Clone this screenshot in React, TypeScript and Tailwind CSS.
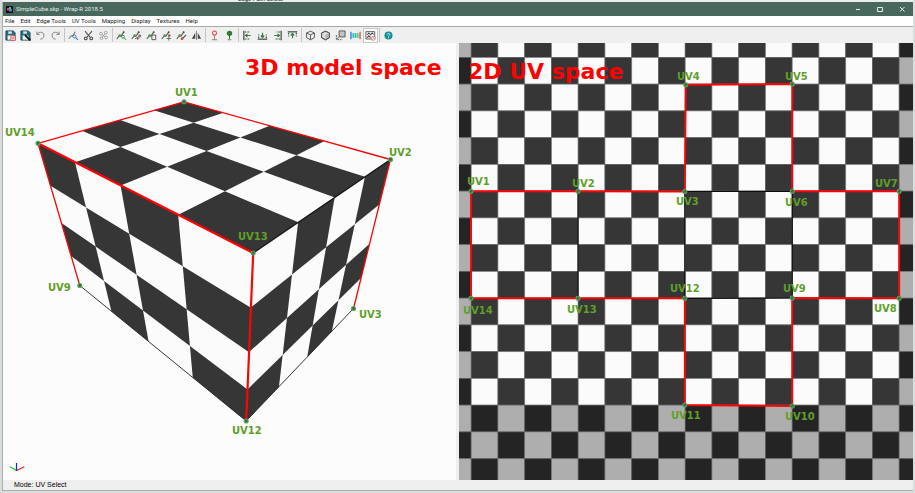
import type { ReactNode } from 'react'

type Point = [number, number]

interface Label {
  text: string
  x: number
  y: number
}

interface Tool {
  name: string
  icon: ReactNode
  active?: boolean
}

const MENU = ['File', 'Edit', 'Edge Tools', 'UV Tools', 'Mapping', 'Display', 'Textures', 'Help']

const VIEW_BOX = '0 0 454 437'
const DARK = '#363636'
const LIGHT = '#fbfbfb'
const RED = '#fa0505'

// Cube corners in the 3D view
const CUBE: Record<string, Point> = {
  UV14: [35, 100.3],
  UV1: [181, 58.8],
  UV2: [387.5, 116.5],
  UV13: [250.2, 210],
  UV9: [76.8, 242.5],
  UV12: [243.2, 378],
  UV3: [350.5, 265.5]
}

const CUBE_LABELS: Label[] = [
  { text: 'UV1', x: 172, y: 53 },
  { text: 'UV14', x: 2, y: 93 },
  { text: 'UV2', x: 386, y: 113 },
  { text: 'UV13', x: 235, y: 197 },
  { text: 'UV9', x: 45, y: 248 },
  { text: 'UV3', x: 356, y: 275 },
  { text: 'UV12', x: 229, y: 391 }
]

// Unfolded corners in the UV view
const UV: Record<string, Point> = {
  UV1: [12, 148.3],
  UV2: [119, 148.3],
  UV3: [225.8, 148.5],
  UV4: [226.8, 41.8],
  UV5: [333.3, 41],
  UV6: [333.3, 148.3],
  UV7: [440.2, 148.3],
  UV8: [440.2, 255.3],
  UV9: [333.2, 255],
  UV10: [333.3, 363],
  UV11: [225.8, 362],
  UV12: [225.8, 255.3],
  UV13: [119, 255.3],
  UV14: [12, 255.3]
}

const UV_LABELS: Label[] = [
  { text: 'UV4', x: 218, y: 37 },
  { text: 'UV5', x: 326, y: 37 },
  { text: 'UV1', x: 8, y: 142 },
  { text: 'UV2', x: 113, y: 144 },
  { text: 'UV7', x: 416, y: 144 },
  { text: 'UV3', x: 217, y: 162 },
  { text: 'UV6', x: 326, y: 163 },
  { text: 'UV12', x: 211, y: 249 },
  { text: 'UV9', x: 324, y: 249 },
  { text: 'UV14', x: 4, y: 271 },
  { text: 'UV13', x: 108, y: 270 },
  { text: 'UV8', x: 415, y: 269 },
  { text: 'UV11', x: 212, y: 376 },
  { text: 'UV10', x: 326, y: 377 }
]

const OUTLINE = ['UV1', 'UV2', 'UV3', 'UV4', 'UV5', 'UV6', 'UV7', 'UV8', 'UV9', 'UV10', 'UV11', 'UV12', 'UV13', 'UV14']
const FOLDS = [['UV2', 'UV13'], ['UV3', 'UV12'], ['UV6', 'UV9'], ['UV3', 'UV6'], ['UV12', 'UV9']]

// Maps the unit square onto a quad: (0,0) (1,0) (1,1) (0,1) -> a b c d
function projector(a: Point, b: Point, c: Point, d: Point) {
  const sx = a[0] - b[0] + c[0] - d[0]
  const sy = a[1] - b[1] + c[1] - d[1]
  const dx1 = b[0] - c[0]
  const dy1 = b[1] - c[1]
  const dx2 = d[0] - c[0]
  const dy2 = d[1] - c[1]
  const det = dx1 * dy2 - dx2 * dy1
  const g = (sx * dy2 - dx2 * sy) / det
  const h = (dx1 * sy - sx * dy1) / det

  return (u: number, v: number): Point => {
    const w = g * u + h * v + 1
    return [
      ((b[0] - a[0] + g * b[0]) * u + (d[0] - a[0] + h * d[0]) * v + a[0]) / w,
      ((b[1] - a[1] + g * b[1]) * u + (d[1] - a[1] + h * d[1]) * v + a[1]) / w
    ]
  }
}

function points(list: Point[]) {
  return list.map(p => p.join(',')).join(' ')
}

function Face({ corners, darkFirst }: { corners: [string, string, string, string]; darkFirst: boolean }) {
  const [a, b, c, d] = corners.map(name => CUBE[name])
  const project = projector(a, b, c, d)
  const cells: ReactNode[] = []

  for (let row = 0; row < 4; row++) {
    for (let col = 0; col < 4; col++) {
      if (((row + col) % 2 === 0) !== darkFirst) continue
      const u = col / 4
      const v = row / 4
      cells.push(
        <polygon
          key={`${row}-${col}`}
          points={points([project(u, v), project(u + 0.25, v), project(u + 0.25, v + 0.25), project(u, v + 0.25)])}
          fill={DARK}
        />
      )
    }
  }

  return (
    <g>
      <polygon points={points([a, b, c, d])} fill={LIGHT} />
      {cells}
    </g>
  )
}

function Markers({ corners }: { corners: Record<string, Point> }) {
  return (
    <g fill="#3f6b43" stroke="#5aa35a" strokeWidth="1.1">
      {Object.entries(corners).map(([name, [x, y]]) => (
        <circle key={name} cx={x} cy={y} r="2" />
      ))}
    </g>
  )
}

function Labels({ items }: { items: Label[] }) {
  return (
    <g className="fill-[#5f9f2a] text-[10px] font-bold">
      {items.map(item => (
        <text key={item.text} x={item.x} y={item.y}>
          {item.text}
        </text>
      ))}
    </g>
  )
}

function ModelView() {
  return (
    <svg viewBox={VIEW_BOX} className="block w-full bg-[#fcfcfc] font-['DejaVu_Sans',sans-serif]">
      <Face corners={['UV14', 'UV1', 'UV2', 'UV13']} darkFirst={false} />
      <Face corners={['UV14', 'UV13', 'UV12', 'UV9']} darkFirst />
      <Face corners={['UV13', 'UV2', 'UV3', 'UV12']} darkFirst={false} />

      <g fill="none" strokeLinejoin="round">
        <polyline points={points([CUBE.UV9, CUBE.UV12, CUBE.UV3])} stroke="#222" strokeWidth="0.9" />
        <polyline points={points([CUBE.UV13, CUBE.UV2])} stroke="#111" strokeWidth="1.3" />
        <polyline points={points([CUBE.UV9, CUBE.UV14, CUBE.UV1, CUBE.UV2, CUBE.UV3])} stroke={RED} strokeWidth="1.3" />
        <polyline points={points([CUBE.UV14, CUBE.UV13, CUBE.UV12])} stroke={RED} strokeWidth="2.2" />
      </g>
      <Markers corners={CUBE} />
      <Labels items={CUBE_LABELS} />
      <text x="242" y="32" className="fill-[#ff0000] text-[22px] font-bold">3D model space</text>

      {/* Axis gizmo */}
      <g strokeWidth="1.2" fill="none">
        <path d="M13.7 427.5L7 423.8" stroke="#00e000" />
        <path d="M13.7 427.5L21.3 423.8" stroke="#f02020" />
        <path d="M13.5 428V420" stroke="#2020f0" />
      </g>
      <rect x="453" width="1" height="437" fill="#efefef" />
    </svg>
  )
}

const CELL = 26.75

function Checker() {
  const cells: ReactNode[] = []
  for (let row = -1; row < 16; row++) {
    for (let col = -1; col < 17; col++) {
      const dim = col < 0 || col > 15 || row > 12
      const light = (row + col) % 2 === 0
      const fill = light ? (dim ? '#aeaeae' : LIGHT) : dim ? '#242424' : DARK
      cells.push(
        <rect key={`${row}:${col}`} x={12.2 + col * CELL} y={14.4 + row * CELL} width={CELL} height={CELL} fill={fill} />
      )
    }
  }
  return <g stroke="#6e6e6e" strokeWidth="0.8" strokeOpacity="0.75">{cells}</g>
}

function UvView() {
  return (
    <svg viewBox={VIEW_BOX} className="block w-full bg-[#363636] font-['DejaVu_Sans',sans-serif]">
      <Checker />
      {FOLDS.map(([from, to]) => (
        <polyline key={from + to} points={points([UV[from], UV[to]])} stroke="#0c0c0c" strokeWidth="1.2" />
      ))}
      <polygon points={points(OUTLINE.map(name => UV[name]))} fill="none" stroke={RED} strokeWidth="1.9" />
      <Markers corners={UV} />
      <Labels items={UV_LABELS} />
      <text x="9" y="36" className="fill-[#ff0000] text-[22px] font-bold">2D UV space</text>
    </svg>
  )
}

function Icon({ children }: { children: ReactNode }) {
  return (
    <svg className="h-[11px] w-[11px]" viewBox="0 0 12 12" fill="none" stroke="#505050" strokeWidth="1" aria-hidden="true">
      {children}
    </svg>
  )
}

function Floppy({ children }: { children: ReactNode }) {
  return (
    <Icon>
      <path d="M1 1h8l2 2v8H1z" fill="#256c7c" stroke="#1b4c5a" />
      <path d="M3.5 1.5h4v2.6h-4z" fill="#d7e4e8" stroke="none" />
      <path d="M2.8 6h6.4v4.6H2.8z" fill="#eef2f3" stroke="none" />
      {children}
    </Icon>
  )
}

// Pen stroke shared by the edge editing tools
function EdgeTool({ children }: { children: ReactNode }) {
  return (
    <Icon>
      <path d="M0.8 9.8L3.8 6.2 5.4 6.6 8.6 2" stroke="#5a5a5a" strokeWidth="1.2" />
      <circle cx="8.4" cy="2.3" r="1" fill="#444" stroke="none" />
      <circle cx="4" cy="6.2" r="1.5" fill="#4f9a50" stroke="none" />
      {children}
    </Icon>
  )
}

const TOOL_GROUPS: Tool[][] = [
  [
    {
      name: 'Save',
      icon: (
        <Floppy>
          <rect x="6.3" y="6.3" width="5" height="5" fill="#f2c3c5" stroke="#d4474d" strokeWidth="0.7" />
          <path d="M7.4 8.8h2.8" stroke="#d4474d" strokeWidth="0.8" />
        </Floppy>
      )
    },
    {
      name: 'Save As',
      icon: (
        <Floppy>
          <path d="M5.5 5.5l6 6" stroke="#111" strokeWidth="2" />
        </Floppy>
      )
    },
    {
      name: 'Undo',
      icon: (
        <Icon>
          <path d="M2 1.8v3h3M2.3 4.5C4 2 8 1.7 9.4 4.4c1.3 2.7-.7 5.6-3.6 5.5" stroke="#7a7a7a" />
        </Icon>
      )
    },
    {
      name: 'Redo',
      icon: (
        <Icon>
          <path d="M10 1.8v3H7M9.7 4.5C8 2 4 1.7 2.6 4.4c-1.3 2.7.7 5.6 3.6 5.5" stroke="#7a7a7a" />
        </Icon>
      )
    }
  ],
  [
    {
      name: 'Select Edges',
      icon: (
        <Icon>
          <path d="M0.8 9.5L3.5 6.2 5.4 6.6 7.8 1.8" stroke="#6a717c" strokeWidth="1.1" />
          <circle cx="7" cy="7" r="1.7" stroke="#4a70b8" />
          <path d="M8.3 8.3l2.6 2.5" stroke="#4a70b8" strokeWidth="1.2" />
        </Icon>
      )
    },
    {
      name: 'Cut',
      icon: (
        <Icon>
          <path d="M2.2 1.2L8 8.2M9.8 1.2L4 8.2" strokeWidth="1.2" />
          <circle cx="3" cy="9.2" r="1.5" strokeWidth="1.2" />
          <circle cx="9" cy="9.2" r="1.5" strokeWidth="1.2" />
        </Icon>
      )
    },
    {
      name: 'Weld',
      icon: (
        <Icon>
          <g stroke="#a0a0a0">
            <circle cx="3.2" cy="4" r="1.5" />
            <circle cx="8.5" cy="3" r="1.5" />
            <circle cx="3.8" cy="8.8" r="1.5" />
            <circle cx="8.8" cy="8.2" r="1.5" />
            <path d="M4.4 5l3.2 2.3M7.5 4.2L4.7 7.6" />
          </g>
        </Icon>
      )
    }
  ],
  [
    {
      name: 'Edge Zoom',
      icon: (
        <EdgeTool>
          <circle cx="7.6" cy="7.4" r="1.6" stroke="#3e8f4f" />
          <path d="M8.8 8.6l2.4 2.4" stroke="#3e8f4f" />
        </EdgeTool>
      )
    },
    {
      name: 'Edge Path',
      icon: (
        <EdgeTool>
          <path d="M4.5 9.5L10.5 6M8 5.5l2.7.4-1.3 2.5" />
          <circle cx="7.4" cy="9.3" r="1.2" fill="#b04545" stroke="none" />
        </EdgeTool>
      )
    },
    {
      name: 'Edge Loop',
      icon: (
        <EdgeTool>
          <path d="M7.6 5.5h3v5H6.4V7z" fill="#f4f4f4" />
        </EdgeTool>
      )
    },
    {
      name: 'Add Edge',
      icon: (
        <EdgeTool>
          <circle cx="9" cy="6" r="1.3" fill="#b04545" stroke="none" />
          <path d="M6 9.3h5M8.5 7v4.5" stroke="#4a7a4a" />
        </EdgeTool>
      )
    },
    {
      name: 'Remove Edge',
      icon: (
        <EdgeTool>
          <path d="M5.8 10.5L10.9 5.6" strokeWidth="1.4" />
          <circle cx="6.6" cy="9.4" r="1.4" fill="#c44" stroke="none" />
        </EdgeTool>
      )
    },
    {
      name: 'Mirror',
      icon: (
        <Icon>
          <path d="M6 1v10" stroke="#777" />
          <path d="M4.6 3v6.5H1zM7.4 3v6.5H11z" fill="#444" stroke="none" />
        </Icon>
      )
    }
  ],
  [
    {
      name: 'Unpin',
      icon: (
        <Icon>
          <circle cx="6" cy="3.4" r="2.2" stroke="#d75a60" strokeWidth="1.2" />
          <path d="M6 5.6v4.2" stroke="#d75a60" />
          <path d="M3.2 10.6h5.6" stroke="#777" />
        </Icon>
      )
    },
    {
      name: 'Pin',
      icon: (
        <Icon>
          <circle cx="6" cy="3.6" r="2.9" fill="#2f7a35" stroke="none" />
          <path d="M6 5.5v4.3" stroke="#33543a" />
          <path d="M4 10.6h4" stroke="#777" />
        </Icon>
      )
    }
  ],
  [
    {
      name: 'Align Left',
      icon: (
        <Icon>
          <path d="M2 0.8v10.4" strokeWidth="1.4" />
          <path d="M3 2.2h5M3 9.8h6" strokeDasharray="2 1" strokeWidth="1.3" />
          <path d="M9.5 6H4M6 4.2L3.8 6 6 7.8" stroke="#3a7a45" strokeWidth="1.3" />
        </Icon>
      )
    },
    {
      name: 'Align Bottom',
      icon: (
        <Icon>
          <path d="M0.8 10h10.4" strokeWidth="1.4" />
          <path d="M1.8 9V5M10.2 9V5" strokeDasharray="2 1" strokeWidth="1.3" />
          <path d="M6 3v5M4.2 6L6 8.2 7.8 6" stroke="#3a7a45" strokeWidth="1.3" />
        </Icon>
      )
    },
    {
      name: 'Align Right',
      icon: (
        <Icon>
          <path d="M10 0.8v10.4" strokeWidth="1.4" />
          <path d="M9 2.2H5M9 9.8H4" strokeDasharray="2 1" strokeWidth="1.3" />
          <path d="M2.5 6H8M6 4.2L8.2 6 6 7.8" stroke="#3a7a45" strokeWidth="1.3" />
        </Icon>
      )
    },
    {
      name: 'Align Top',
      icon: (
        <Icon>
          <path d="M0.8 2h10.4" strokeWidth="1.4" />
          <path d="M1.8 3v4M10.2 3v4" strokeDasharray="2 1" strokeWidth="1.3" />
          <path d="M6 9V4M4.2 6L6 3.8 7.8 6" stroke="#3a7a45" strokeWidth="1.3" />
        </Icon>
      )
    }
  ],
  [
    {
      name: 'Wireframe',
      icon: (
        <Icon>
          <path d="M6 1.3l4.3 2v5L6 10.7 1.7 8.3v-5zM1.7 3.3L6 5.3l4.3-2M6 5.3v5.4" />
        </Icon>
      )
    },
    {
      name: 'Solid',
      icon: (
        <Icon>
          <path d="M6 1.3l4.3 2v5L6 10.7 1.7 8.3v-5z" fill="#dedede" />
          <path d="M6 5.3l4.3-2v5L6 10.7z" fill="#b5b5b5" stroke="none" />
          <path d="M6 1.3l4.3 2v5L6 10.7 1.7 8.3v-5z" />
        </Icon>
      )
    },
    {
      name: 'Stack',
      icon: (
        <Icon>
          <path d="M4.5 1h6.5v6.5H4.5z" fill="#c4c4c4" />
          <path d="M1.5 5.5v5h5.5" strokeDasharray="2 1" />
          <path d="M2 9.8l2-2" />
        </Icon>
      )
    },
    {
      name: 'Distortion',
      icon: (
        <Icon>
          <rect x="1.5" y="3.5" width="9" height="5" fill="#7ce6d4" stroke="none" />
          <path d="M1 2v8" stroke="#3579d8" strokeWidth="1.4" />
          <path d="M11 2v8" stroke="#e05050" strokeWidth="1.4" />
          <path d="M3.6 3.5v5M6 3.5v5" stroke="#35a9c4" />
          <path d="M8.4 3.5v5" stroke="#86ca46" strokeWidth="1.4" />
        </Icon>
      )
    },
    {
      name: 'Texture',
      active: true,
      icon: (
        <Icon>
          <path d="M1 1.8h9.6v8H1z" stroke="#555" strokeWidth="1" />
          <path d="M2.4 5.2l1.8-2 1.8 2 1.8-2 1.6 1.6M2.4 8.4l1.8-2 1.8 2" stroke="#444" strokeWidth="1.1" />
          <circle cx="9" cy="9" r="2.3" fill="#f8dede" stroke="#d56a6a" strokeWidth="0.8" />
          <path d="M9 7.8V9h1" stroke="#d56a6a" strokeWidth="0.6" />
        </Icon>
      )
    }
  ],
  [
    {
      name: 'Help',
      icon: (
        <Icon>
          <circle cx="6" cy="6" r="4.4" fill="#168f94" stroke="none" />
          <path d="M4.7 4.9c0-1.6 2.7-1.5 2.7 0C7.4 6 6 5.8 6 7.1M6 8v1" stroke="#fff" strokeWidth="0.9" />
        </Icon>
      )
    }
  ]
]

function TitleBar() {
  return (
    <header className="flex h-[14px] items-center bg-[#48685e] text-[#e4ebe8]">
      <svg className="ml-[3px] mr-[3px] h-[7px] w-[7px]" viewBox="0 0 7 7" aria-hidden="true">
        <rect width="7" height="7" fill="#111" />
        <rect x="1" y="2" width="2" height="2.5" fill="#e24a4a" />
        <rect x="3" y="1" width="2" height="3" fill="#4ad06a" />
        <rect x="3" y="3" width="3" height="2.5" fill="#5a7cf0" />
      </svg>
      <h1 className="flex-1 text-[6px] leading-[14px] whitespace-nowrap">SimpleCube.skp - Wrap-R 2018.5</h1>
      <button type="button" aria-label="Minimize" className="flex w-[22px] justify-center">
        <svg className="h-2 w-2" viewBox="0 0 8 8" stroke="currentColor"><path d="M2 4.5h4" /></svg>
      </button>
      <button type="button" aria-label="Maximize" className="flex w-[22px] justify-center">
        <svg className="h-2 w-2" viewBox="0 0 8 8" fill="none" stroke="currentColor"><path d="M1.5 2.5h5v4h-5z" /></svg>
      </button>
      <button type="button" aria-label="Close" className="flex w-[22px] justify-center">
        <svg className="h-2 w-2" viewBox="0 0 8 8" stroke="currentColor"><path d="M2 2l4.5 4.5M6.5 2L2 6.5" /></svg>
      </button>
    </header>
  )
}

function Toolbar() {
  return (
    <div role="toolbar" className="flex h-4 items-center bg-[#efefef]">
      {TOOL_GROUPS.map((group, index) => (
        <div key={index} className="flex items-center">
          {index > 0 && <div className="mx-px h-[14px] w-px bg-[#c4c4c4]" />}
          {group.map(tool => (
            <button
              key={tool.name}
              type="button"
              aria-label={tool.name}
              aria-pressed={tool.active}
              className={`flex h-[15px] w-[15px] items-center justify-center ${
                tool.active ? 'border border-[#c8c8c8] bg-[#fafafa]' : ''
              }`}
            >
              {tool.icon}
            </button>
          ))}
        </div>
      ))}
    </div>
  )
}

export default function App() {
  return (
    <div className="min-h-screen bg-[#d9dedc] px-[2px] pb-[3px] font-['Roboto','Open_Sans',sans-serif]">
      {/* Sliver of the window behind */}
      <div className="flex h-[2px] items-end overflow-hidden bg-[#ededed] pl-[236px]">
        <span className="text-[6px] leading-[6px] text-[#222]">Edge Path Select</span>
      </div>

      <div className="border-b border-l border-[#a9b1ae] bg-[#efefef]">
        <TitleBar />
        <nav className="flex h-[11px] gap-[6px] border-b border-[#a8a8a8] bg-white pl-[2px]">
          {MENU.map(item => (
            <button key={item} type="button" className="text-[6px] leading-[10px] whitespace-nowrap text-[#222]">
              {item}
            </button>
          ))}
        </nav>
        <Toolbar />

        <main className="grid grid-cols-2 gap-[2px]">
          <ModelView />
          <UvView />
        </main>

        <footer className="h-[10px] pl-[11px] font-['Liberation_Sans',sans-serif] text-[7px] leading-[9px] text-black">
          Mode: UV Select
        </footer>
      </div>
    </div>
  )
}
